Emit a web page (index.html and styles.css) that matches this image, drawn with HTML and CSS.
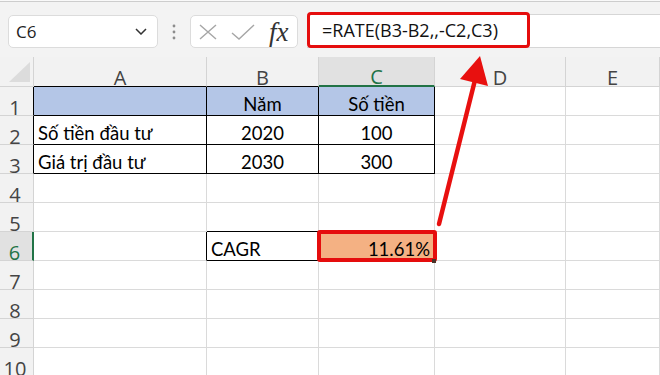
FILE: index.html
```html
<!DOCTYPE html>
<html lang="vi">
<head>
    <meta charset="UTF-8">
    <title>CAGR - RATE</title>
    <link rel="stylesheet" href="styles.css">
</head>
<body>
    <div class="app">
        <div class="ribbon-edge"></div>

        <!-- Formula bar -->
        <div class="formula-bar">
            <div class="name-box">
                <span>C6</span>
                <svg width="12" height="7" viewBox="0 0 12 7"><path d="M1 1l5 5 5-5" fill="none" stroke="#333" stroke-width="1.5"/></svg>
            </div>
            <div class="grip">
                <svg width="4" height="16" viewBox="0 0 4 16"><circle cx="2" cy="2" r="1.4" fill="#8c8c8c"/><circle cx="2" cy="8" r="1.4" fill="#8c8c8c"/><circle cx="2" cy="14" r="1.4" fill="#8c8c8c"/></svg>
            </div>
            <div class="fx-box">
                <svg width="18" height="16" viewBox="0 0 18 16"><path d="M1 1l16 14M17 1L1 15" stroke="#a6a6a6" stroke-width="1.4" fill="none"/></svg>
                <svg width="24" height="16" viewBox="0 0 24 16"><path d="M1 9l7 6L23 1" stroke="#a6a6a6" stroke-width="1.4" fill="none"/></svg>
                <span class="fx">fx</span>
            </div>
            <div class="formula-input">
                <span class="formula-mark">=RATE(B3-B2,,-C2,C3)</span>
            </div>
        </div>

        <!-- Worksheet -->
        <div class="sheet">
            <div class="cell head corner"></div>
            <div class="cell head bb">A</div>
            <div class="cell head bb">B</div>
            <div class="cell head col-sel">C</div>
            <div class="cell head">D</div>
            <div class="cell head">E</div>

            <div class="cell rh br">1</div>
            <div class="cell blue bb br"></div>
            <div class="cell blue bb br center">Năm</div>
            <div class="cell blue bb br center">Số tiền</div>
            <div class="cell"></div>
            <div class="cell"></div>

            <div class="cell rh br">2</div>
            <div class="cell bb br">Số tiền đầu tư</div>
            <div class="cell bb br center">2020</div>
            <div class="cell bb br center">100</div>
            <div class="cell"></div>
            <div class="cell"></div>

            <div class="cell rh br">3</div>
            <div class="cell bb br">Giá trị đầu tư</div>
            <div class="cell bb br center">2030</div>
            <div class="cell bb br center">300</div>
            <div class="cell"></div>
            <div class="cell"></div>

            <div class="cell rh">4</div>
            <div class="cell"></div>
            <div class="cell"></div>
            <div class="cell"></div>
            <div class="cell"></div>
            <div class="cell"></div>

            <div class="cell rh">5</div>
            <div class="cell"></div>
            <div class="cell bb"></div>
            <div class="cell"></div>
            <div class="cell"></div>
            <div class="cell"></div>

            <div class="cell rh row-sel">6</div>
            <div class="cell br"></div>
            <div class="cell bb br">CAGR</div>
            <div class="cell active right">11.61%</div>
            <div class="cell"></div>
            <div class="cell"></div>

            <div class="cell rh">7</div>
            <div class="cell"></div>
            <div class="cell"></div>
            <div class="cell"></div>
            <div class="cell"></div>
            <div class="cell"></div>

            <div class="cell rh">8</div>
            <div class="cell"></div>
            <div class="cell"></div>
            <div class="cell"></div>
            <div class="cell"></div>
            <div class="cell"></div>

            <div class="cell rh">9</div>
            <div class="cell"></div>
            <div class="cell"></div>
            <div class="cell"></div>
            <div class="cell"></div>
            <div class="cell"></div>

            <div class="cell rh">10</div>
            <div class="cell"></div>
            <div class="cell"></div>
            <div class="cell"></div>
            <div class="cell"></div>
            <div class="cell"></div>
        </div>

        <!-- Annotation arrow from the result to the formula -->
        <svg class="arrow" width="660" height="375" viewBox="0 0 660 375">
            <line x1="439" y1="224" x2="475" y2="80" stroke="#e8100f" stroke-width="4.5" stroke-linecap="round"/>
            <polygon points="480,56 460,79 488,86" fill="#e8100f"/>
        </svg>
    </div>
</body>
</html>
```

FILE: styles.css
```css
body {
    margin: 0;
    background-color: #f3f3f3;
    font-family: "Open Sans", sans-serif;
    overflow: hidden;
}
.app {
    position: relative;
    width: 660px;
    height: 375px;
    overflow: hidden;
}
.ribbon-edge {
    height: 1px;
    background-color: #f9f9f9;
    border-bottom: 1px solid #cdcdcd;
}
.formula-bar {
    display: flex;
    align-items: flex-start;
    height: 55px;
    padding: 13px 0 0 8px;
    box-sizing: border-box;
}
.name-box {
    display: flex;
    align-items: center;
    justify-content: space-between;
    width: 150px;
    height: 33px;
    padding: 0 10px 0 7px;
    box-sizing: border-box;
    background-color: white;
    border: 1px solid #dcdcdc;
    border-radius: 5px;
    font-size: 17px;
    color: #222;
}
.grip {
    display: flex;
    align-items: center;
    justify-content: center;
    width: 32px;
    height: 33px;
}
.fx-box {
    display: flex;
    align-items: center;
    width: 108px;
    height: 33px;
    padding: 0 6px 0 8px;
    box-sizing: border-box;
    background-color: white;
    border: 1px solid #dcdcdc;
    border-radius: 5px;
    gap: 14px;
}
.fx {
    font-family: "Liberation Serif", serif;
    font-style: italic;
    font-size: 27px;
    line-height: 30px;
    color: #333;
    margin-left: 0;
}
.formula-input {
    flex: 1;
    display: flex;
    margin-top: -1px;
    margin-left: 9px;
    height: 34px;
    box-sizing: border-box;
    background-color: white;
    border-top: 1px solid #d6d6d6;
    border-bottom: 1px solid #d6d6d6;
}
.formula-mark {
    width: 223px;
    height: 36px;
    margin-top: -3px;
    padding-left: 12px;
    box-sizing: border-box;
    border: 3px solid #e50d0d;
    border-radius: 4px;
    font-size: 18px;
    line-height: 30px;
    color: #111;
    white-space: nowrap;
}

/* worksheet grid */
.sheet {
    display: grid;
    grid-template-columns: 34px 173px 112px 116px 131px 1fr;
    grid-template-rows: 30px repeat(10, 29px);
    background-color: white;
}
.cell {
    display: flex;
    align-items: flex-end;
    padding: 0 4px;
    box-sizing: border-box;
    border-right: 1px solid #dadada;
    border-bottom: 1px solid #dadada;
    font-family: Lato, "Open Sans", sans-serif;
    font-size: 18.5px;
    line-height: 1.2;
    color: black;
    white-space: nowrap;
}
.head, .rh {
    justify-content: center;
    background-color: #f2f2f2;
    border-color: #d4d4d4;
    font-family: "Open Sans", sans-serif;
    font-size: 20px;
    line-height: 17px;
    color: #444;
}
.rh {
    padding: 0 3px 0 0;
    line-height: 15px;
}
.corner {
    position: relative;
}
.corner::after {
    content: "";
    position: absolute;
    right: 3px;
    bottom: 4px;
    border-left: 21px solid transparent;
    border-bottom: 20px solid #dcdcdc;
}
.col-sel {
    background-color: #e1e1e1;
    color: #217346;
    border-bottom: 2px solid #217346;
}
.row-sel {
    background-color: #e1e1e1;
    color: #217346;
    border-right: 2px solid #217346;
}
.center {
    justify-content: center;
}
.right {
    justify-content: flex-end;
}
.bb {
    border-bottom-color: black;
}
.br {
    border-right-color: black;
}
.blue {
    background-color: #b4c6e7;
}
.active {
    position: relative;
    background-color: #f4b183;
}
.active::after {
    content: "";
    position: absolute;
    left: -2px;
    top: -2px;
    right: -3px;
    bottom: -2px;
    border: 4px solid #e50d0d;
    border-radius: 3px;
}
.active::before {
    content: "";
    position: absolute;
    right: -2px;
    bottom: -3px;
    width: 4px;
    height: 4px;
    background-color: #4a3328;
    z-index: 1;
}
.arrow {
    position: absolute;
    left: 0;
    top: 0;
    pointer-events: none;
}
```
